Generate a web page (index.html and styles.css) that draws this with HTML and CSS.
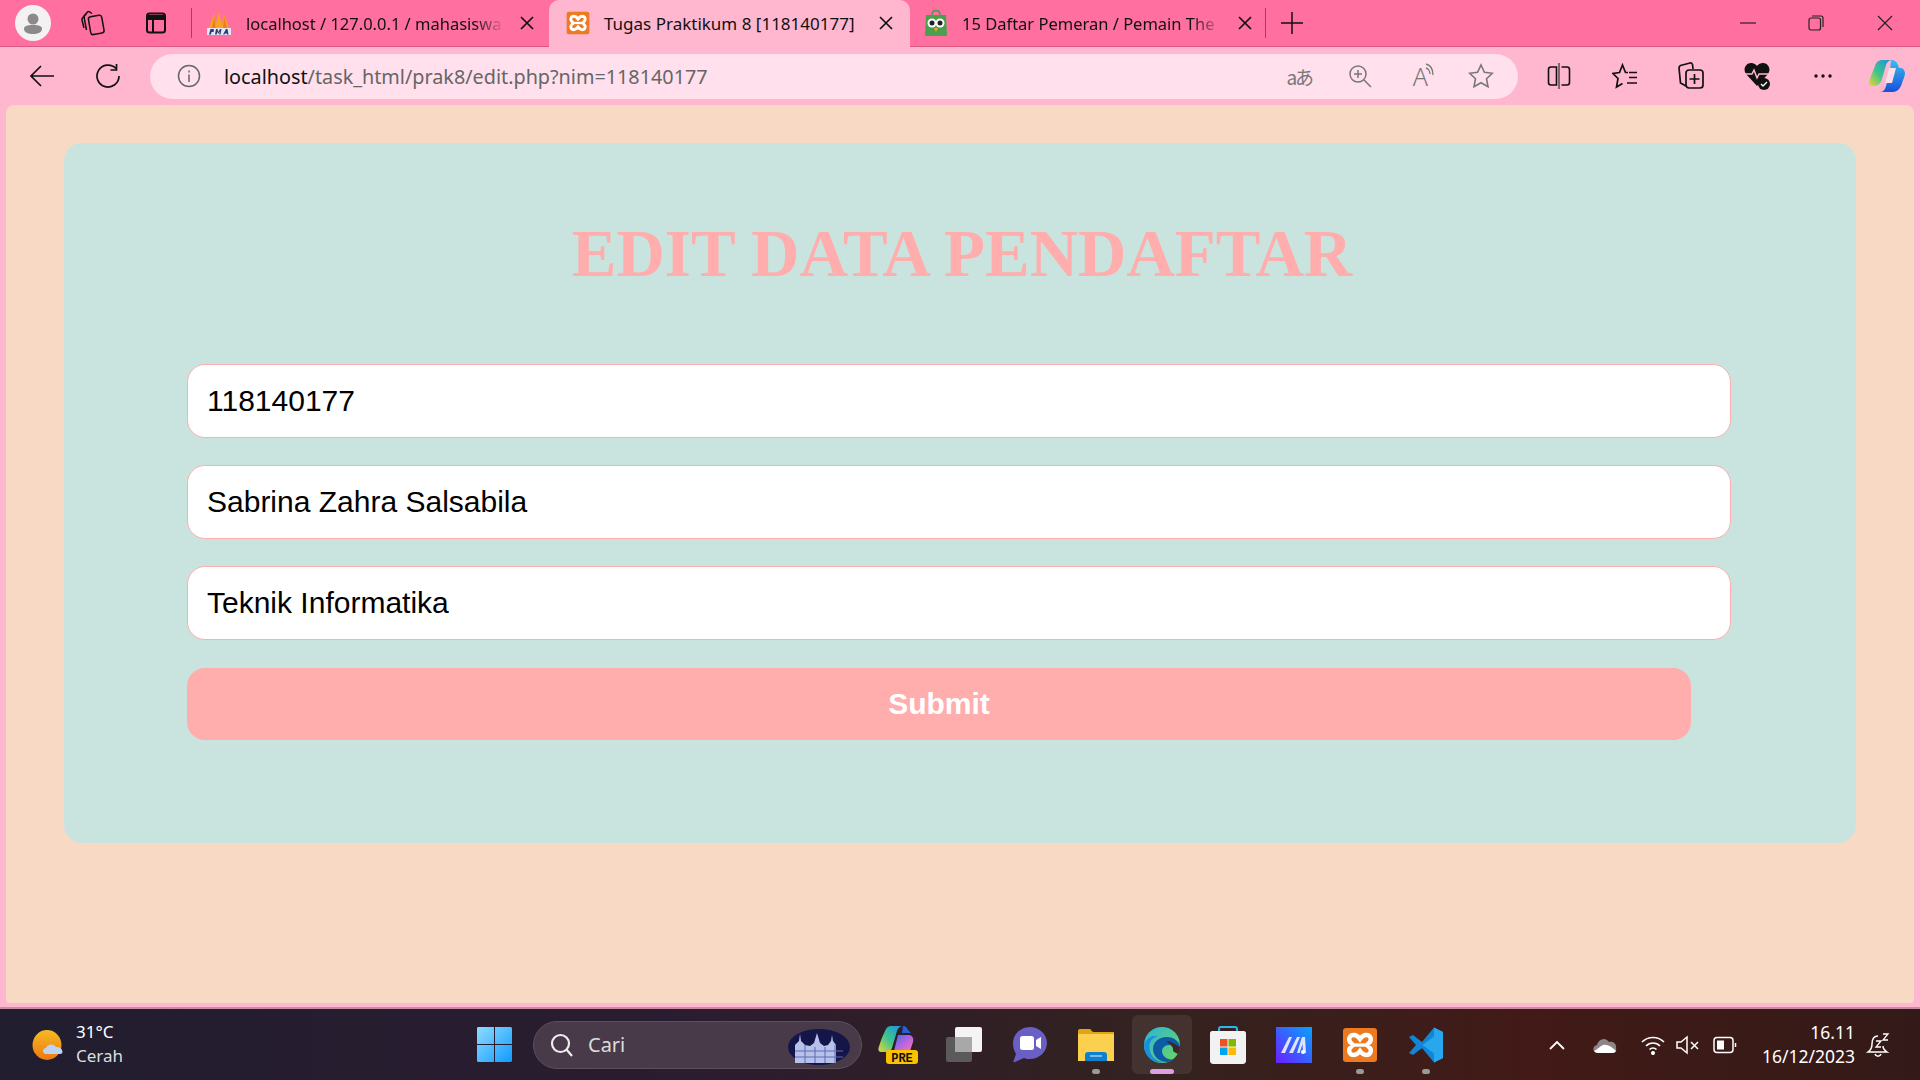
FILE: index.html
```html
<!DOCTYPE html>
<html lang="en">
<head>
    <meta charset="UTF-8">
    <title>Tugas Praktikum 8 [118140177]</title>
    <link rel="stylesheet" href="styles.css">
</head>
<body>
<svg class="defs" width="0" height="0">
    <defs>
        <symbol id="xampp" viewBox="0 0 36 36">
            <rect x="1" y="1" width="34" height="34" rx="3" fill="#ee7a1f"/>
            <path d="M12 8C7 8 6 13 8.500 15.500L11 18l-2.500 2.500C6 23 7 28 12 28c3 0 4.500-2 6-4 1.500 2 3 4 6 4 5 0 6-5 3.500-7.500L25 18l2.500-2.500C30 13 29 8 24 8c-3 0-4.500 2-6 4-1.500-2-3-4-6-4z" fill="none" stroke="#fff" stroke-width="4.400"/>
            <path d="M11 18h14" stroke="#fff" stroke-width="3.400"/>
        </symbol>
        <linearGradient id="copilotA" x1="0" y1="1" x2="1" y2="0">
            <stop offset="0" stop-color="#e8d735"/><stop offset=".45" stop-color="#3fc48d"/><stop offset="1" stop-color="#1a8fe8"/>
        </linearGradient>
        <linearGradient id="copilotB" x1="0" y1="0" x2="1" y2="1">
            <stop offset="0" stop-color="#3a6ee8"/><stop offset=".5" stop-color="#b564e0"/><stop offset="1" stop-color="#f47ab0"/>
        </linearGradient>
        <linearGradient id="copilotC" x1="0" y1="0" x2="0" y2="1">
            <stop offset="0" stop-color="#35c0f2"/><stop offset="1" stop-color="#1a4fd8"/>
        </linearGradient>
        <linearGradient id="edgeA" x1="0" y1="0" x2="1" y2="1">
            <stop offset="0" stop-color="#2bb6d8"/><stop offset="1" stop-color="#6fd65c"/>
        </linearGradient>
        <linearGradient id="markA" x1="0" y1="1" x2="1" y2="0">
            <stop offset="0" stop-color="#6a1fff"/><stop offset="1" stop-color="#06a3ff"/>
        </linearGradient>
        <linearGradient id="winA" x1="0" y1="0" x2="1" y2="1">
            <stop offset="0" stop-color="#8fdcff"/><stop offset="1" stop-color="#0f9bff"/>
        </linearGradient>
        <linearGradient id="sunA" x1="0" y1="0" x2="0" y2="1">
            <stop offset="0" stop-color="#f5bb24"/><stop offset="1" stop-color="#f0780f"/>
        </linearGradient>
    </defs>
</svg>

<div class="tabstrip">
    <div class="strip-btn"><span class="avatar"><svg width="26" height="26" viewBox="0 0 26 26"><circle cx="13" cy="9" r="5.500" fill="#8a8a8a"/><path d="M4 19c0-3 3-4 9-4s9 1 9 4c0 3-4 5-9 5s-9-2-9-5z" fill="#8a8a8a"/></svg></span></div>
    <div class="strip-btn"><svg width="26" height="26" viewBox="0 0 26 26" fill="none" stroke="#111" stroke-width="1.500"><rect x="9.500" y="6" width="13.500" height="18" rx="2.500" transform="rotate(-10 16 15)"/><path d="M12 3.500 9.500 1.800C8.700 1.300 8 1.500 7.500 2L4.500 5.500C4 6 4 6.800 4.100 7.500L6.500 20"/><path d="M6 4 2.500 8C2 8.500 1.800 9.200 2 10L4 18"/></svg></div>
    <div class="strip-btn wide"><svg width="24" height="24" viewBox="0 0 24 24" fill="none" stroke="#111" stroke-width="2"><rect x="3" y="2.500" width="18" height="19" rx="2.500"/><path d="M3 5h18v3H3z" fill="#111"/><path d="M9 8v13"/></svg></div>
    <span class="strip-sep"></span>
    <div class="tab">
        <svg class="favicon" width="26" height="26" viewBox="0 0 26 26"><path d="M3 18 8 3l2 15zM9 18 13 1l3 17zM15 18l3-14 5 14z" fill="#f5a623"/><path d="M8 6l1.500 12H6zM18 6l3 12h-4z" fill="#f47a1e"/><rect x="1" y="18" width="24" height="7" fill="#e9e4f2"/><path d="M3 24.500 4.500 19h3l.5 1.500-.5 1.500H5.500L5 24.500zM9 24.500l1-5.500h1.500l.8 3 1.700-3h1.500l-1 5.500h-1.300l.5-3-1.500 2.500-.8-2.500-.6 3zM17 24.500l3-5.500h1.500l1 5.500H21l-.2-1h-1.800l-.5 1z" fill="#2a3f7a"/></svg>
        <span class="tab-title faded">localhost / 127.0.0.1 / mahasiswa</span>
        <svg class="close" width="16" height="16" viewBox="0 0 16 16"><path d="M2 2l12 12M14 2 2 14" stroke="#111" stroke-width="1.700"/></svg>
    </div>
    <div class="tab active">
        <svg class="favicon" width="24" height="24"><use href="#xampp"/></svg>
        <span class="tab-title">Tugas Praktikum 8 [118140177]</span>
        <svg class="close" width="16" height="16" viewBox="0 0 16 16"><path d="M2 2l12 12M14 2 2 14" stroke="#111" stroke-width="1.700"/></svg>
    </div>
    <div class="tab last">
        <svg class="favicon" width="24" height="28" viewBox="0 0 24 28"><path d="M8 6c0-6 8-6 8 0" fill="none" stroke="#4a9a4a" stroke-width="1.500"/><path d="M2 6h20l1 21H1z" fill="#4c9f4c"/><circle cx="8" cy="14" r="4.500" fill="#fff"/><circle cx="16" cy="14" r="4.500" fill="#fff"/><circle cx="8" cy="14" r="2.500" fill="#222"/><circle cx="16" cy="14" r="2.500" fill="#222"/><path d="M10 19h4l-2 4z" fill="#f5a623"/></svg>
        <span class="tab-title faded">15 Daftar Pemeran / Pemain The</span>
        <svg class="close" width="16" height="16" viewBox="0 0 16 16"><path d="M2 2l12 12M14 2 2 14" stroke="#111" stroke-width="1.700"/></svg>
    </div>
    <span class="strip-sep flush"></span>
    <div class="new-tab"><svg width="22" height="22" viewBox="0 0 22 22"><path d="M11 0v22M0 11h22" stroke="#111" stroke-width="1.500"/></svg></div>
    <div class="win-controls">
        <div class="win-btn"><svg width="16" height="16" viewBox="0 0 16 16"><path d="M0 8h16" stroke="#222" stroke-width="1.200"/></svg></div>
        <div class="win-btn"><svg width="16" height="16" viewBox="0 0 16 16" fill="none" stroke="#222" stroke-width="1.200"><rect x="1" y="3" width="11.500" height="12" rx="2"/><path d="M4 1h9c1.200 0 2 .8 2 2v9"/></svg></div>
        <div class="win-btn"><svg width="16" height="16" viewBox="0 0 16 16"><path d="M1 1l14 14M15 1 1 15" stroke="#222" stroke-width="1.200"/></svg></div>
    </div>
</div>

<div class="toolbar">
    <div class="tool-btn"><svg width="26" height="24" viewBox="0 0 26 24" fill="none" stroke="#111" stroke-width="1.700"><path d="M25 12H2M12 2 2 12l10 10"/></svg></div>
    <div class="tool-btn"><svg width="26" height="26" viewBox="0 0 26 26" fill="none" stroke="#111" stroke-width="1.700"><path d="M21 5.500A11 11 0 1 0 24 13"/><path d="M21.500 1v6h-6"/></svg></div>
    <div class="address">
        <svg class="addr-info" width="24" height="24" viewBox="0 0 24 24" fill="none" stroke="#666" stroke-width="1.500"><circle cx="12" cy="12" r="10.500"/><path d="M12 10.500V18M12 6.500v2"/></svg>
        <span class="url"><b>localhost</b>/task_html/prak8/edit.php?nim=118140177</span>
        <div class="addr-icons">
            <div class="addr-btn"><span class="translate">aあ</span></div>
            <div class="addr-btn"><svg width="24" height="24" viewBox="0 0 24 24" fill="none" stroke="#777" stroke-width="1.500"><circle cx="10" cy="10" r="8"/><path d="M15.800 15.800 23 23M10 6v8M6 10h8"/></svg></div>
            <div class="addr-btn"><span class="read-a">A</span><svg class="read-waves" width="10" height="14" viewBox="0 0 10 14" fill="none" stroke="#777" stroke-width="1.300"><path d="M1 1c4 1 7 5 7 11M1 5c2 .5 4 3 4 6"/></svg></div>
            <div class="addr-btn"><svg width="26" height="26" viewBox="0 0 26 26" fill="none" stroke="#777" stroke-width="1.600"><path d="M13 2l3.400 7.300 7.900 1-5.800 5.400 1.500 7.900-7-3.900-7 3.900 1.500-7.900L1.700 10.300l7.900-1z"/></svg></div>
        </div>
    </div>
    <div class="tool-right">
        <div class="tool-btn"><svg width="24" height="26" viewBox="0 0 24 26" fill="none" stroke="#111" stroke-width="1.600"><path d="M12 0v26" stroke-width="1"/><path d="M9.500 4H4C2.500 4 1.500 5 1.500 6.500v13C1.500 21 2.500 22 4 22h5.500zM14.500 4H20c1.500 0 2.500 1 2.500 2.500v13c0 1.500-1 2.500-2.500 2.500h-5.500"/></svg></div>
        <div class="tool-btn"><svg width="26" height="26" viewBox="0 0 26 26" fill="none" stroke="#111" stroke-width="1.700"><path d="M16 9.500h-2.500L10.500 2 7.500 9.500 1 10.500l5 5-1.500 8.500 6-3.500"/><path d="M17 9.500h8M17 14.500h8M15 20h10"/></svg></div>
        <div class="tool-btn"><svg width="26" height="28" viewBox="0 0 26 28" fill="none" stroke="#111" stroke-width="1.700"><path d="M8 24 2.500 21 1 6c0-1 .5-2 1.500-2.500L12 1c1-.2 2 .4 2.500 1.500L15 7"/><rect x="8" y="8" width="17" height="18" rx="3"/><path d="M16.500 12v10M11.500 17h10"/></svg></div>
        <div class="tool-btn"><svg width="26" height="28" viewBox="0 0 26 28"><path d="M13 24 2 12C-2 6 3 0 8 1c2 .3 4 1.500 5 3 1-1.500 3-2.700 5-3 5-1 10 5 6 11z" fill="#111"/><path d="M1 12h7l2-4 3 8 2-4h10" fill="none" stroke="#ffb6cf" stroke-width="1.500"/><circle cx="20" cy="22" r="6" fill="#111"/><path d="M17 22l2 2 4-4" fill="none" stroke="#fff" stroke-width="1.300"/></svg></div>
        <div class="tool-btn"><svg width="20" height="6" viewBox="0 0 20 6" fill="#111"><circle cx="3" cy="3" r="1.700"/><circle cx="10" cy="3" r="1.700"/><circle cx="17" cy="3" r="1.700"/></svg></div>
        <div class="tool-btn copilot"><svg width="36" height="32" viewBox="0 0 36 32"><path d="M22 0c4 0 6 2 7 5l1 3h2c2 0 4 3 4 5 0 3-2 7-3 10-1 5-5 9-9 9H11c3 0 5-2 6-6l4-14z" fill="url(#copilotC)"/><path d="M13 0h10c-3 0-5 2-6 5l-4 14c-1 4-4 7-8 7H3c-2 0-3-1-3-3 0-2 1-4 2-7l4-10C7 2 10 0 13 0z" fill="url(#copilotA)"/><path d="M20 8h7l-4 15h-7z" fill="#ffdce8"/></svg></div>
    </div>
</div>

<div class="frame">
    <main class="page">
        <section class="card">
            <h1 class="card-title">EDIT DATA PENDAFTAR</h1>
            <form class="edit-form">
                <input class="field" type="text" value="118140177">
                <input class="field" type="text" value="Sabrina Zahra Salsabila">
                <input class="field" type="text" value="Teknik Informatika">
                <button class="submit-btn" type="button">Submit</button>
            </form>
        </section>
    </main>
</div>

<footer class="taskbar">
    <div class="weather">
        <svg width="34" height="30" viewBox="0 0 34 30"><ellipse cx="15" cy="15" rx="14.500" ry="15" fill="url(#sunA)"/><path d="M28 24H14c-4 0-4-6 0-6 1-4 8-5 10-1 6-1 9 7 4 7z" fill="#bcd4f2"/></svg>
        <div class="weather-text">
            <span class="temp">31°C</span>
            <span class="cond">Cerah</span>
        </div>
    </div>
    <div class="task-item"><svg width="35" height="35" viewBox="0 0 35 35" fill="url(#winA)"><path d="M0 1.500C0 .700.700 0 1.500 0H17v17H0zM18 0h15.500c.8 0 1.500.700 1.500 1.500V17H18zM0 18h17v17H1.500C.700 35 0 34.300 0 33.500zM18 18h17v15.500c0 .8-.700 1.500-1.500 1.500H18z"/></svg></div>
    <div class="search">
        <svg width="24" height="24" viewBox="0 0 24 24" fill="none" stroke="#eee" stroke-width="2.200"><circle cx="10.500" cy="10.500" r="8.500"/><path d="M16.500 16.500 22 23"/></svg>
        <span class="search-text">Cari</span>
        <svg class="search-art" width="62" height="40" viewBox="0 0 62 40"><ellipse cx="31" cy="22" rx="31" ry="18" fill="#14164a"/><path d="M7 38V20l4-4 1-7 1 7 4 4 5 1 4-3 3-10 3 10 4 3 4-1 3-4 1-6 1 6 3 4v18z" fill="#b6c2ea"/><path d="M7 26h48M7 32h48M17 20v18M27 22v16M37 22v16M47 20v18" stroke="#5e6bb5"/></svg>
    </div>
    <div class="task-item"><svg width="40" height="38" viewBox="0 0 40 38"><path d="M8 3c1-2 3-3 5-3h12c-3 0-5 2-6 5l-5 17c-1 3-3 4-5 4H3c-2 0-3-2-2.500-4C3 14 5 9 8 3z" fill="url(#copilotA)"/><path d="M25 0c3 0 4 2 5 4l3 3H24z" fill="#2460e0"/><path d="M20 9h11c3 0 5 3 4 7l-3 9H16z" fill="url(#copilotB)"/><rect x="8" y="24" width="32" height="14" rx="3" fill="#fcc200"/><text class="pre-label" x="24" y="35.500" text-anchor="middle">PRE</text></svg></div>
    <div class="task-item"><svg width="36" height="36" viewBox="0 0 36 36"><rect x="0" y="10" width="26" height="25" rx="2" fill="#5a5a5a"/><rect x="9" y="0" width="27" height="25" rx="2" fill="#f4f4f4"/><rect x="9" y="10" width="17" height="15" fill="#a8a8a8"/></svg></div>
    <div class="task-item"><svg width="34" height="36" viewBox="0 0 34 36"><path d="M17 0c9 0 17 7 17 16s-8 16-17 16c-2 0-4 0-6-1l-9 4c-1 .5-2 0-1.500-1L3 27C1 24 0 20 0 16 0 7 8 0 17 0z" fill="#6a5fc4"/><rect x="7" y="9" width="14" height="14" rx="2.500" fill="#fff"/><path d="M23 13l5-3v12l-5-3z" fill="#fff"/></svg></div>
    <div class="task-item"><svg width="36" height="32" viewBox="0 0 36 32"><path d="M0 2c0-1 .6-2 2-2h10l3 3h21v5H0z" fill="#e0a416"/><path d="M0 5h36v27H0z" fill="#fbd04f"/><path d="M7 32v-6c0-2 1-3 3-3h16c2 0 3 1 3 3v6z" fill="#0f7fd0"/><rect x="12" y="26" width="12" height="2" fill="#e8f2ff" opacity=".5"/></svg><span class="dot"></span></div>
    <div class="task-item active"><svg width="36" height="36" viewBox="0 0 36 36"><circle cx="18" cy="18" r="18" fill="url(#edgeA)"/><path d="M36 20c0-5-6-10-13-10-9 0-14 6-14 12 0 7 6 13 14 13 3 0 5-1 8-3-9 2-13-4-13-8 0-3 3-6 7-6 6 0 6 6 11 2z" fill="#0d5aa6"/><path d="M0 18c2-7 9-10 14-9-7 2-10 8-8 15 1 5 6 11 15 11C8 38 0 28 0 18z" fill="#1a8fe0"/><path d="M22 14c5 0 8 3 14 6 0 2-1 5-2 7-2-1-4-2-5-3 1-3-2-7-7-10z" fill="#3a282b"/></svg><span class="dot dot-active"></span></div>
    <div class="task-item"><svg width="36" height="38" viewBox="0 0 36 38"><path d="M9 7V3c0-1 .7-2 2-2h14c1.300 0 2 1 2 2v4" fill="none" stroke="#2fb4ee" stroke-width="2"/><path d="M2 5h32c1 0 2 1 2 2v28c0 1.600-1.400 3-3 3H3c-1.600 0-3-1.400-3-3V7c0-1 1-2 2-2z" fill="#f2f2f2"/><rect x="10" y="13" width="7.500" height="7.500" fill="#f25022"/><rect x="18.500" y="13" width="7.500" height="7.500" fill="#7fba00"/><rect x="10" y="21.500" width="7.500" height="7.500" fill="#00a4ef"/><rect x="18.500" y="21.500" width="7.500" height="7.500" fill="#ffb900"/></svg></div>
    <div class="task-item"><svg width="36" height="36" viewBox="0 0 36 36"><rect width="36" height="36" fill="url(#markA)"/><path d="M5 26 13 10h3L9 26zM13 26l8-16h3l-7 16zM21 26l5-16h3l1 16h-3l-.5-9-3 9z" fill="#dfe4fb"/><circle cx="27" cy="25" r="2" fill="#fff"/></svg></div>
    <div class="task-item"><svg width="36" height="36"><use href="#xampp"/></svg><span class="dot"></span></div>
    <div class="task-item"><svg width="36" height="36" viewBox="0 0 36 36"><path d="M26 .5 14 15 5 8 1 10l7 8-7 8 4 2 9-7 12 14.500L35 31V5z" fill="#1186d4"/><path d="M26 .5 35 5v26l-9 4.500V9.500L14.500 18 26 26.500z" fill="#28a7ee"/></svg><span class="dot"></span></div>
    <div class="tray">
        <svg class="tray-chevron" width="16" height="10" viewBox="0 0 16 10" fill="none" stroke="#fff" stroke-width="1.800"><path d="M1 9l7-7 7 7"/></svg>
        <svg class="tray-cloud" width="24" height="16" viewBox="0 0 24 16"><path d="M5 16c-6 0-6-7-1-8 1-5 8-9 12-3 4-1 8 2 7 6 1 3-1 5-3 5z" fill="#8e8587"/><path d="M1 14c3-1 6-5 9-6 4-1 8 1 13 6-1 1-2 2-3 2H5c-2 0-3-1-4-2z" fill="#fff"/></svg>
        <svg class="tray-wifi" width="24" height="20" viewBox="0 0 24 20" fill="none" stroke="#fff" stroke-width="1.700"><path d="M1 7c6-6 16-6 22 0M5 11c4-4 10-4 14 0M8.500 14.500c2-2 5-2 7 0"/><circle cx="12" cy="18" r="1.200" fill="#fff"/></svg>
        <svg class="tray-vol" width="24" height="20" viewBox="0 0 24 20" fill="none" stroke="#fff" stroke-width="1.500"><path d="M1 7v6h4l6 5V2L5 7zM15 7l7 7M22 7l-7 7"/></svg>
        <svg class="tray-batt" width="24" height="18" viewBox="0 0 24 18" fill="none" stroke="#fff" stroke-width="1.500"><rect x="1" y="1.500" width="19" height="15" rx="3"/><rect x="4" y="4.500" width="7" height="9" fill="#fff" stroke="none"/><path d="M22.500 7v4"/></svg>
        <div class="clock">
            <span>16.11</span>
            <span>16/12/2023</span>
        </div>
        <svg class="tray-bell" width="24" height="26" viewBox="0 0 24 26" fill="none" stroke="#fff" stroke-width="1.500"><path d="M12 4C7 4 6 8 6 12c0 4-1 6-4 8h19c-3-2-4-3-4-6M9 22c1 3 5 3 6 0"/><path d="M10 9h5l-5 6h5M17 2h5l-5 6h5" stroke-width="1.300"/></svg>
    </div>
</footer>
</body>
</html>
```

FILE: styles.css
```css
* {
    box-sizing: border-box;
}
html, body {
    margin: 0;
    height: 100%;
}
body {
    display: flex;
    flex-direction: column;
    height: 1080px;
    overflow: hidden;
    font-family: "Noto Sans", sans-serif;
    color: #111;
}
.defs {
    position: absolute;
}

/* tab strip */
.tabstrip {
    display: flex;
    align-items: center;
    height: 47px;
    flex: none;
    padding-left: 3px;
    background: #ff6f9f;
    border-bottom: 1px solid #d9597f;
}
.strip-btn {
    display: flex;
    align-items: center;
    justify-content: center;
    flex: none;
    width: 60px;
}
.strip-btn.wide {
    width: 66px;
}
.avatar {
    display: flex;
    align-items: center;
    justify-content: center;
    width: 36px;
    height: 36px;
    border-radius: 50%;
    background: #f4f1f2;
}
.strip-sep {
    flex: none;
    width: 1px;
    height: 30px;
    margin-left: 2px;
    background: #8d4a60;
}
.strip-sep.flush {
    margin-left: 0;
}
.tab {
    display: flex;
    align-items: center;
    gap: 14px;
    flex: none;
    width: 357px;
    height: 47px;
    padding: 0 14px;
    font-size: 17px;
    white-space: nowrap;
}
.tab.last {
    width: 355px;
    padding-right: 12px;
}
.tab.active {
    width: 361px;
    height: 58px;
    margin-top: 11px;
    padding: 0 16px 11px 17px;
    background: #ffb6cf;
    border-radius: 10px 10px 0 0;
}
.tab-title {
    flex: 1;
    min-width: 0;
}
.tab-title.faded {
    font-size: 16.500px;
    -webkit-mask-image: linear-gradient(to right, #000 88%, transparent 100%);
    mask-image: linear-gradient(to right, #000 88%, transparent 100%);
}
.favicon, .close {
    flex: none;
}
.new-tab {
    display: flex;
    align-items: center;
    justify-content: center;
    flex: none;
    width: 52px;
}
.win-controls {
    display: flex;
    margin-left: auto;
}
.win-btn {
    display: flex;
    align-items: center;
    justify-content: center;
    width: 68px;
    height: 46px;
}
.win-btn:last-child {
    width: 69px;
    margin-right: 1px;
}

/* address bar row */
.toolbar {
    display: flex;
    align-items: center;
    flex: none;
    height: 58px;
    padding-left: 9px;
    background: #ffb6cf;
}
.tool-btn {
    display: flex;
    align-items: center;
    justify-content: center;
    flex: none;
    width: 66px;
    height: 45px;
}
.tool-btn.copilot {
    width: 62px;
}
.address {
    display: flex;
    align-items: center;
    flex: none;
    width: 1368px;
    height: 45px;
    margin-left: 9px;
    padding-left: 27px;
    border-radius: 23px;
    background: #ffe0ec;
}
.url {
    margin-left: 23px;
    font-size: 19.800px;
    color: #666;
}
.url b {
    font-weight: 400;
    color: #111;
}
.addr-icons {
    display: flex;
    margin-left: auto;
    margin-right: 7px;
}
.addr-btn {
    position: relative;
    display: flex;
    align-items: center;
    justify-content: center;
    width: 60.500px;
    height: 45px;
    color: #777;
}
.translate {
    font-family: "Noto Sans CJK JP", "Noto Sans", sans-serif;
    font-size: 19px;
    letter-spacing: -2px;
}
.read-a {
    font-size: 25px;
    font-weight: 300;
}
.read-waves {
    position: absolute;
    top: 9px;
    right: 16px;
}
.tool-right {
    display: flex;
    flex: none;
    margin-left: 8px;
}

/* page itself */
.frame {
    flex: 1;
    min-height: 0;
    padding: 0 6px 4px;
    background: #ffb6cf;
    border-bottom: 2px solid #c98ca0;
}
.page {
    height: 100%;
    padding: 38px 58px 0;
    background: #f7d9c4;
    border-radius: 8px 8px 4px 4px;
}
.card {
    height: 700px;
    padding: 74px 123px 0;
    background: #c9e4de;
    border-radius: 18px;
}
.card-title {
    margin: 0 0 75px;
    padding-left: 4px;
    font-family: "Liberation Serif", serif;
    font-size: 67px;
    line-height: 72px;
    font-weight: 700;
    text-align: center;
    color: #ffadad;
}
.edit-form {
    display: flex;
    flex-direction: column;
    gap: 27px;
}
.field {
    width: 1544px;
    height: 74px;
    padding: 0 19px;
    border: 1.500px solid #ffadad;
    border-radius: 18px;
    outline: none;
    background: #fff;
    font-family: "Liberation Sans", sans-serif;
    font-size: 30px;
    color: #000;
}
.submit-btn {
    width: 1504px;
    height: 72px;
    margin-top: 1px;
    border: none;
    border-radius: 18px;
    background: #ffadad;
    font-family: "Liberation Sans", sans-serif;
    font-size: 30px;
    font-weight: 700;
    color: #fff;
}

/* windows taskbar */
.taskbar {
    display: flex;
    align-items: center;
    flex: none;
    height: 71px;
    background: linear-gradient(to right, #211e2f 0%, #2b1c30 36%, #33221f 60%, #421a17 80%, #331a18 100%);
    color: #fff;
}
.weather {
    display: flex;
    align-items: center;
    gap: 10px;
    flex: none;
    width: 461px;
    padding-left: 32px;
}
.weather-text {
    display: flex;
    flex-direction: column;
    padding-bottom: 2px;
    font-size: 17px;
    line-height: 24px;
}
.cond {
    color: #ddd;
}
.task-item {
    position: relative;
    display: flex;
    align-items: center;
    justify-content: center;
    flex: none;
    width: 66px;
    height: 59px;
}
.task-item.active::before {
    content: "";
    position: absolute;
    top: 0;
    bottom: 0;
    left: 3px;
    right: 3px;
    border-radius: 6px;
    background: rgba(255, 255, 255, 0.08);
}
.task-item.active svg {
    position: relative;
}
.dot {
    position: absolute;
    bottom: 0;
    left: 29px;
    width: 8px;
    height: 5px;
    border-radius: 3px;
    background: #9a9a9a;
}
.dot-active {
    left: 21px;
    width: 24px;
    background: #dca0e0;
}
.search {
    display: flex;
    align-items: center;
    flex: none;
    width: 329px;
    height: 48px;
    margin: 0 3px 0 6px;
    padding-left: 16px;
    border: 1.500px solid #5d5058;
    border-radius: 24px;
    background: #483a49;
    font-size: 20px;
    color: #ddd;
}
.search-text {
    margin-left: 14px;
}
.search-art {
    margin-left: auto;
    margin-right: 11px;
}
.pre-label {
    font-family: "Liberation Mono", monospace;
    font-size: 12px;
    font-weight: 700;
    fill: #111;
}
.tray {
    display: flex;
    align-items: center;
    margin-left: auto;
    padding-right: 30px;
}
.tray-chevron {
    margin-right: 28px;
}
.tray-cloud {
    margin-right: 24px;
}
.tray-wifi {
    margin-right: 11px;
}
.tray-vol {
    margin-right: 13px;
}
.clock {
    display: flex;
    flex-direction: column;
    align-items: flex-end;
    width: 118px;
    padding-bottom: 2px;
    font-size: 17.500px;
    line-height: 24px;
}
.tray-bell {
    margin-left: 11px;
}
```
